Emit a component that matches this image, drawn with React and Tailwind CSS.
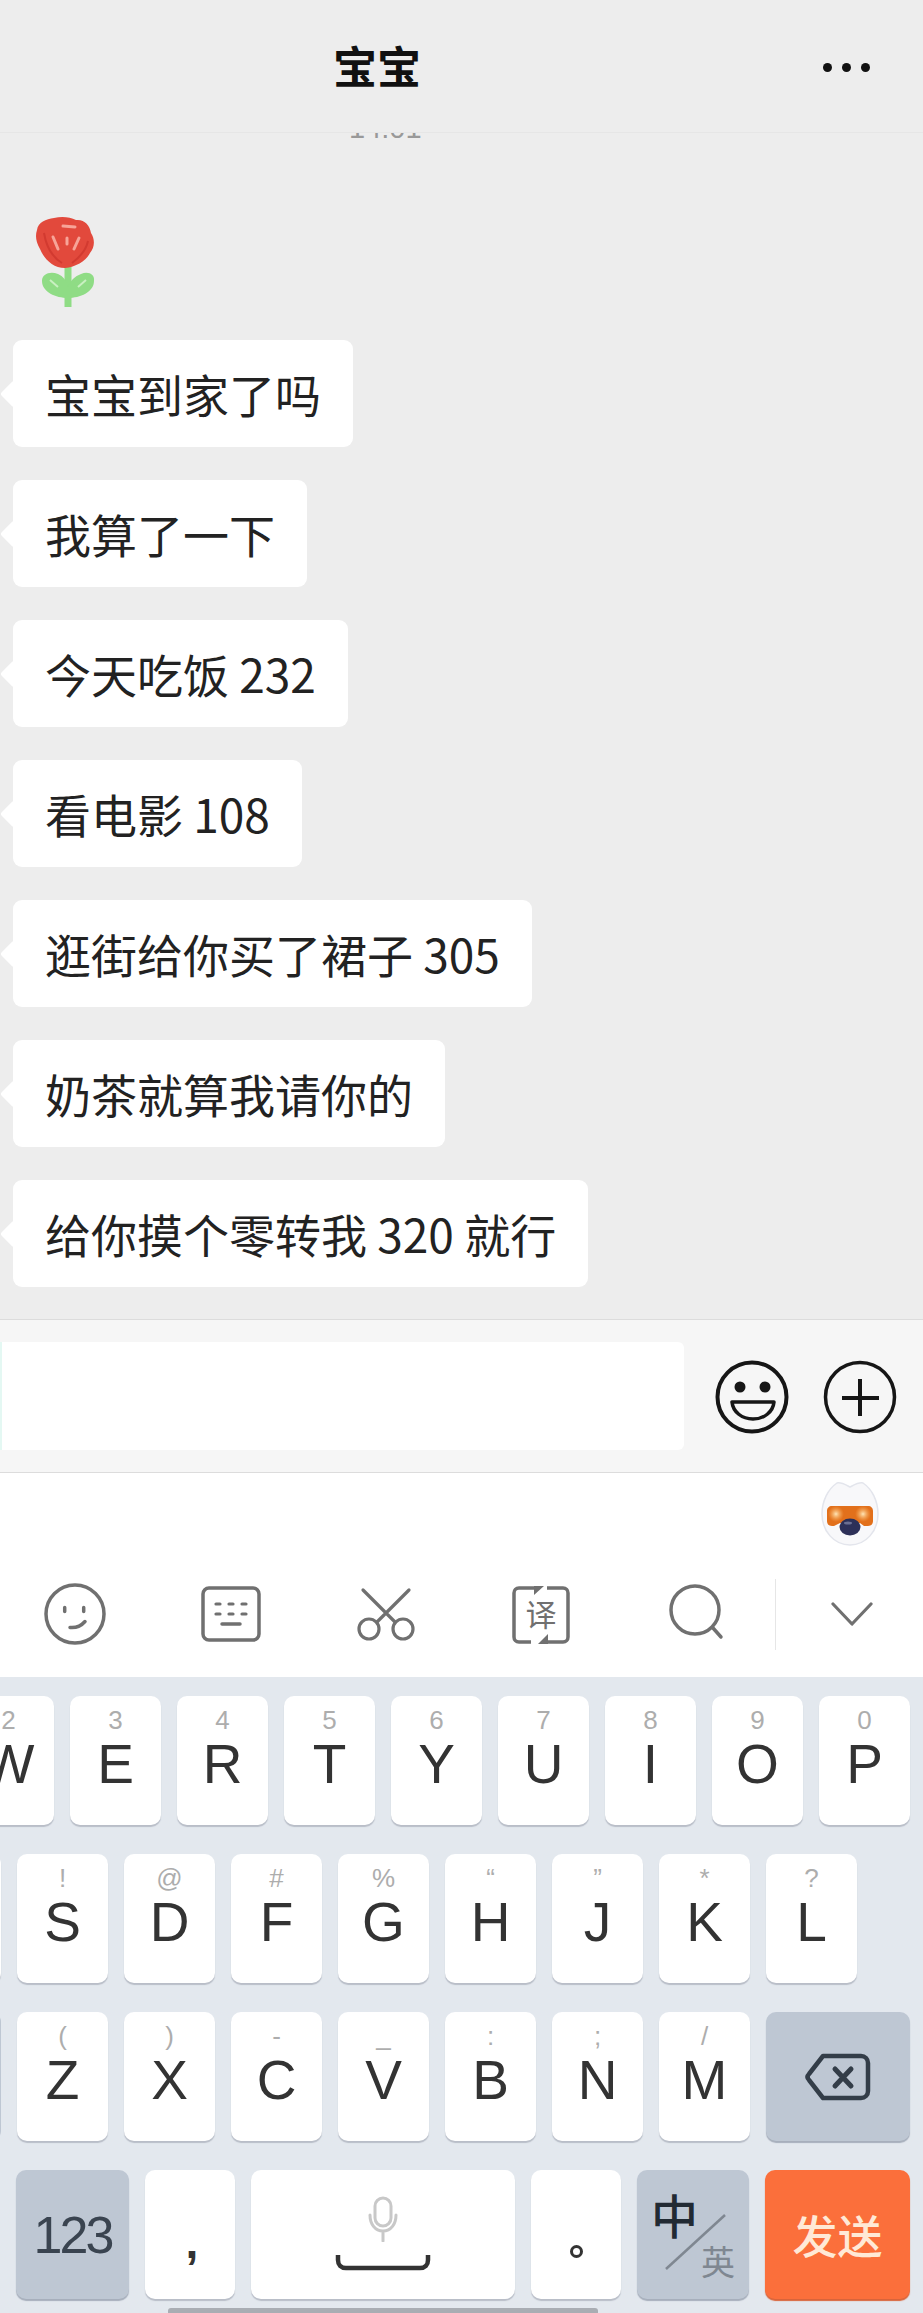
const messages = [
  { text: '宝宝到家了吗' },
  { text: '我算了一下' },
  { text: '今天吃饭 232' },
  { text: '看电影 108' },
  { text: '逛街给你买了裙子 305' },
  { text: '奶茶就算我请你的' },
  { text: '给你摸个零转我 320 就行' },
];

const row1 = [['2', 'W'], ['3', 'E'], ['4', 'R'], ['5', 'T'], ['6', 'Y'], ['7', 'U'], ['8', 'I'], ['9', 'O'], ['0', 'P']];
const row2 = [['!', 'S'], ['@', 'D'], ['#', 'F'], ['%', 'G'], ['“', 'H'], ['”', 'J'], ['*', 'K'], ['?', 'L']];
const row3 = [['(', 'Z'], [')', 'X'], ['-', 'C'], ['_', 'V'], [':', 'B'], [';', 'N'], ['/', 'M']];

function Flower() {
  return (
    <svg width="100" height="110" viewBox="0 0 100 110" className="block">
      <path d="M48 60V102" stroke="#8fdc85" strokeWidth="7" fill="none" />
      <path d="M48 93C36 93 22 87 22 76C22 69 30 66 38 69C43 71 47 76 48 82C50 76 55 71 61 69C68 66 75 69 74 76C74 87 60 93 48 93Z" fill="#8fdc85" />
      <path d="M30 75L38 82M66 75L58 82" stroke="#c9f0c1" strokeWidth="2" fill="none" />
      <path d="M17 25C18 17 26 14 34 13C42 11 50 12 56 15C64 14 70 20 71 28C75 34 75 42 70 48C66 56 56 62 45 63C33 63 24 54 20 44C16 37 15 31 17 25Z" fill="#e2493c" />
      <path d="M33 32L38 44M47 33L47 39M59 33L54 44M43 21L55 22" stroke="#f7a498" strokeWidth="3" strokeLinecap="round" fill="none" />
      <path d="M24 28C26 40 32 52 42 58M68 36C66 46 60 52 52 58" stroke="#d23a30" strokeWidth="2" fill="none" />
    </svg>
  );
}

function Bubble({ text }) {
  return (
    <div className="relative h-[107px] w-fit flex items-center rounded-[9px] bg-white px-[32px] text-[46px] text-[#222222]">
      <div className="absolute left-[-9px] top-[44px] h-[20px] w-[20px] rotate-45 rounded-[3px] bg-white" />
      <span className="relative">{text}</span>
    </div>
  );
}

function GrinIcon() {
  return (
    <svg width="76" height="76" viewBox="0 0 76 76" fill="none" stroke="#161616">
      <circle cx="38" cy="38" r="34.5" strokeWidth="4" />
      <circle cx="26" cy="28" r="5.5" fill="#161616" stroke="none" />
      <circle cx="51" cy="28" r="5.5" fill="#161616" stroke="none" />
      <path d="M18 43H60C59 53 50 60 39 60C28 60 19 53 18 43Z" strokeWidth="3.5" strokeLinejoin="round" />
    </svg>
  );
}

function PlusIcon() {
  return (
    <svg width="76" height="76" viewBox="0 0 76 76" fill="none" stroke="#161616">
      <circle cx="38" cy="38" r="34.5" strokeWidth="3.5" />
      <path d="M20 39H57M38 20V57" strokeWidth="4" />
    </svg>
  );
}

function Mascot() {
  return (
    <svg width="60" height="66" viewBox="0 0 60 66">
      <defs>
        <radialGradient id="glow">
          <stop offset="0" stopColor="#ffe6b8" />
          <stop offset="1" stopColor="#ffb45c" stopOpacity="0" />
        </radialGradient>
      </defs>
      <path d="M30 6C26 4 21 1 17 2C8 8 2 20 2 33C2 50 14 64 30 64C46 64 58 50 58 33C58 20 52 8 43 2C39 1 34 4 30 6Z" fill="#f8f8fa" stroke="#e3e5ec" strokeWidth="1.5" />
      <path d="M12 25H48C51 25 53 27 53 30V40C53 43 51 45 48 45H44L40 42H20L14 45H12C9 45 7 43 7 40V30C7 27 9 25 12 25Z" fill="#e2701b" />
      <circle cx="16" cy="33" r="8" fill="url(#glow)" />
      <circle cx="43" cy="33" r="8" fill="url(#glow)" />
      <ellipse cx="30" cy="46" rx="10.5" ry="8.5" fill="#2d3058" />
      <ellipse cx="28" cy="42" rx="4" ry="1.5" fill="#6b6f92" />
    </svg>
  );
}

function SmileIcon() {
  return (
    <svg width="64" height="64" viewBox="0 0 64 64" fill="none" stroke="#707070" strokeLinecap="round">
      <circle cx="32" cy="32" r="29" strokeWidth="3.5" />
      <path d="M21.7 25.5V29.5M40.7 25.5V29.5" strokeWidth="3.5" />
      <path d="M27 45.5C32 46 38 44 42 39.5" strokeWidth="3.5" />
    </svg>
  );
}

function KeyboardIcon() {
  return (
    <svg width="64" height="64" viewBox="0 0 64 64" fill="none" stroke="#707070" strokeLinecap="round">
      <rect x="4" y="6" width="56" height="52" rx="6" strokeWidth="3.5" />
      <path d="M17 22H21M30 22H34M43 22H47M17 32H21M30 32H34M43 32H47" strokeWidth="3.2" />
      <path d="M23 42H41" strokeWidth="3.5" />
    </svg>
  );
}

function ScissorsIcon() {
  return (
    <svg width="64" height="64" viewBox="0 0 64 64" fill="none" stroke="#707070" strokeWidth="3.2" strokeLinecap="round">
      <path d="M9 8L41 40M55 8L23 40" />
      <circle cx="15" cy="47" r="10" />
      <circle cx="49" cy="47" r="10" />
    </svg>
  );
}

function TranslateIcon() {
  return (
    <svg width="64" height="64" viewBox="0 0 64 64" fill="none" stroke="#707070">
      <path d="M26 6H10C7 6 5 8 5 11V55C5 58 7 60 10 60H22M38 6H54C57 6 59 8 59 11V55C59 58 57 60 54 60H38" strokeWidth="3.5" />
      <path d="M25 4L35 4L25 13Z" fill="#707070" stroke="none" />
      <path d="M39 62L29 62L39 52Z" fill="#707070" stroke="none" />
      <text x="32" y="44" textAnchor="middle" fontSize="31" fill="#707070" stroke="none" fontFamily="'Noto Sans CJK SC', sans-serif">译</text>
    </svg>
  );
}

function SearchIcon() {
  return (
    <svg width="64" height="64" viewBox="0 0 64 64" fill="none" stroke="#707070" strokeWidth="3.5" strokeLinecap="round">
      <circle cx="31" cy="28" r="24" />
      <path d="M49 46L57 55" />
    </svg>
  );
}

function LetterKey({ hint, letter }) {
  return (
    <div className="h-[129px] w-[91px] shrink-0 rounded-[10px] bg-white shadow-[0_2px_1px_#b9bec8]">
      <div className="h-[48px] text-center text-[26px] leading-[48px] text-[#adadad]">{hint}</div>
      <div className="h-[40px] text-center text-[55px] leading-[40px] text-[#333333]">{letter}</div>
    </div>
  );
}

export default function App() {
  return (
    <div className="h-[2313px] w-[923px] overflow-hidden bg-[#ededed] font-['Noto_Sans_CJK_SC',sans-serif]">
      <header className="flex h-[133px] items-center justify-between border-b border-[#e6e6e6] pb-[2px] pl-[333px] pr-[53px]">
        <h1 className="text-[44px] font-bold text-[#111111]">宝宝</h1>
        <div className="mt-[4px] flex gap-[10px]">
          <span className="h-[9px] w-[9px] rounded-full bg-[#111111]" />
          <span className="h-[9px] w-[9px] rounded-full bg-[#111111]" />
          <span className="h-[9px] w-[9px] rounded-full bg-[#111111]" />
        </div>
      </header>

      <main className="h-[1186px] overflow-hidden">
        <div className="ml-[349px] mt-[-19px] h-[28px] font-['Liberation_Sans',sans-serif] text-[29px] leading-[28px] text-[#999999]">14:01</div>
        <div className="ml-[20px] mt-[63px]">
          <Flower />
        </div>
        <div className="ml-[13px] mt-[25px] flex flex-col gap-[33px]">
          {messages.map(m => (
            <Bubble key={m.text} text={m.text} />
          ))}
        </div>
      </main>

      <div className="flex h-[154px] items-center border-y border-[#dcdcdc] bg-[#f6f6f6]">
        <div className="h-[108px] w-[684px] rounded-r-[6px] border-l-[2px] border-[#e4f8f3] bg-white" />
        <div className="ml-[30px] mt-[2px] flex gap-[32px]">
          <GrinIcon />
          <PlusIcon />
        </div>
      </div>

      <div className="h-[204px] bg-white">
        <div className="flex h-[104px] justify-end pr-[43px] pt-[8px]">
          <Mascot />
        </div>
        <div className="ml-[-3px] flex h-[74px] items-center">
          <div className="flex w-[156px] justify-center"><SmileIcon /></div>
          <div className="flex w-[155px] justify-center"><KeyboardIcon /></div>
          <div className="flex w-[155px] justify-center"><ScissorsIcon /></div>
          <div className="flex w-[155px] justify-center"><TranslateIcon /></div>
          <div className="flex w-[157px] justify-center pr-[2px]"><SearchIcon /></div>
          <div className="h-[71px] w-px bg-[#e6e6e6]" />
          <div className="ml-[55px]">
            <svg width="42" height="24" viewBox="0 0 42 24" fill="none" stroke="#707070" strokeWidth="3.2" strokeLinecap="round" strokeLinejoin="round">
              <path d="M2 2L21 22L40 2" />
            </svg>
          </div>
        </div>
      </div>

      <div className="flex h-[636px] flex-col gap-[29px] bg-[#e3e8ee] pt-[19px] font-['Liberation_Sans',sans-serif]">
        <div className="ml-[-37px] flex gap-[16px]">
          {row1.map(([hint, letter]) => (
            <LetterKey key={letter} hint={hint} letter={letter} />
          ))}
        </div>
        <div className="ml-[-90px] flex gap-[16px]">
          <LetterKey hint="" letter="" />
          {row2.map(([hint, letter]) => (
            <LetterKey key={letter} hint={hint} letter={letter} />
          ))}
        </div>
        <div className="ml-[-140px] flex gap-[16px]">
          <div className="h-[129px] w-[141px] shrink-0 rounded-[10px] bg-[#bec7d3]" />
          {row3.map(([hint, letter]) => (
            <LetterKey key={letter} hint={hint} letter={letter} />
          ))}
          <div className="flex h-[129px] w-[144px] shrink-0 items-center justify-center rounded-[10px] bg-[#bec7d3] shadow-[0_2px_1px_#a7afbc]">
            <svg width="66" height="48" viewBox="0 0 66 48" fill="none" stroke="#333d48" strokeWidth="4.5" strokeLinejoin="round" strokeLinecap="round">
              <path d="M18 3H56C60 3 63 6 63 10V38C63 42 60 45 56 45H18L4 27C2 25 2 23 4 21Z" />
              <path d="M30 16L46 33M46 16L30 33" strokeWidth="5" />
            </svg>
          </div>
        </div>

        <div className="ml-[16px] flex gap-[16px]">
          <div className="flex h-[129px] w-[113px] items-center justify-center rounded-[10px] bg-[#bec7d3] text-[52px] tracking-[-3px] text-[#3a4450] shadow-[0_2px_1px_#a7afbc]">123</div>
          <div className="flex h-[129px] w-[90px] items-center justify-center rounded-[10px] bg-white pl-[4px] pt-[14px] text-[46px] font-bold leading-none text-[#333333] shadow-[0_2px_1px_#b9bec8]">,</div>
          <div className="flex h-[129px] w-[264px] flex-col items-center rounded-[10px] bg-white pt-[26px] shadow-[0_2px_1px_#b9bec8]">
            <svg width="30" height="46" viewBox="0 0 30 46" fill="none" stroke="#c8c8c8" strokeWidth="3" strokeLinecap="round">
              <rect x="7" y="2" width="16" height="28" rx="8" />
              <path d="M2 19C2 28 7 35 15 35C23 35 28 28 28 19M15 35V45" />
            </svg>
            <svg width="96" height="16" viewBox="0 0 96 16" fill="none" stroke="#333333" strokeWidth="4.5" className="mt-[13px]">
              <path d="M3 0V5C3 10 6 13 11 13H85C90 13 93 10 93 5V0" />
            </svg>
          </div>
          <div className="flex h-[129px] w-[90px] items-center justify-center rounded-[10px] bg-white shadow-[0_2px_1px_#b9bec8]">
            <span className="mt-[34px] h-[13px] w-[13px] rounded-full border-[3px] border-[#333333]" />
          </div>
          <div className="relative h-[129px] w-[112px] rounded-[10px] bg-[#bec7d3] font-['Noto_Sans_CJK_SC',sans-serif] shadow-[0_2px_1px_#a7afbc]">
            <span className="absolute left-[14px] top-[14px] text-[47px] font-medium leading-[60px] text-[#222a33]">中</span>
            <svg width="64" height="58" viewBox="0 0 64 58" className="absolute left-[27px] top-[43px]" fill="none" stroke="#7f8791" strokeWidth="2.5">
              <path d="M61 2L2 56" />
            </svg>
            <span className="absolute left-[64px] top-[69px] text-[34px] leading-[44px] text-[#7f8791]">英</span>
          </div>
          <div className="flex h-[129px] w-[145px] items-center justify-center rounded-[10px] bg-[#fb6f3b] font-['Noto_Sans_CJK_SC',sans-serif] text-[45px] font-medium text-[#ffe9d6] shadow-[0_2px_1px_#d9643a]">发送</div>
        </div>

        <div className="ml-[168px] mt-[-20px] h-[5px] w-[430px] shrink-0 rounded-t-[3px] bg-[#a9adb3]" />
      </div>
    </div>
  );
}
